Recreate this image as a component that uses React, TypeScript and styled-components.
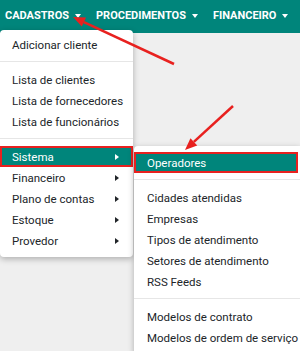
import styled, { createGlobalStyle } from 'styled-components';

const COLORS = {
    TEAL: '#00857b',
    PAGE: '#efefef',
    WHITE: '#ffffff',
    TEXT: '#212529',
    DIVIDER: '#e6e6e6',
    RED: '#e8211f',
};

const GlobalStyle = createGlobalStyle`
    html, body {
        margin: 0;
        padding: 0;
        overflow: hidden;
    }
    body {
        font-family: Roboto, 'Liberation Sans', sans-serif;
        background: ${COLORS.PAGE};
    }
`;

const Page = styled.div`
    position: relative;
    width: 300px;
    height: 351px;
    overflow: hidden;
    background: ${COLORS.PAGE};
`;

const NavBar = styled.nav`
    display: flex;
    align-items: center;
    gap: 15px;
    height: 33px;
    padding: 0 0 2px 5px;
    box-sizing: border-box;
    background: ${COLORS.TEAL};
`;

const NavItem = styled.div`
    display: flex;
    align-items: center;
    gap: 6px;
    color: ${COLORS.WHITE};
    font-size: 11px;
    font-weight: 700;
    white-space: nowrap;
`;

const DownCaret = styled.span`
    width: 0;
    height: 0;
    border-left: 3px solid transparent;
    border-right: 3px solid transparent;
    border-top: 4px solid ${COLORS.WHITE};
`;

const Menu = styled.div<{ $width: number }>`
    position: absolute;
    width: ${(p) => p.$width}px;
    padding: 4px 0 6px;
    background: ${COLORS.WHITE};
    border-radius: 4px;
    box-shadow: 0 2px 6px rgba(0, 0, 0, 0.28);
    box-sizing: border-box;
`;

const MainMenu = styled(Menu)`
    top: 30px;
    left: 0;
`;

const SubMenu = styled(Menu)`
    top: 0;
    left: 134px;
    padding-top: 6px;
    border-radius: 4px 0 0 4px;
`;

const ItemRow = styled.div<{ $active?: boolean }>`
    position: relative;
    display: flex;
    align-items: center;
    justify-content: space-between;
    height: 21px;
    padding: 0 14px 0 12px;
    font-size: 11.5px;
    white-space: nowrap;
    color: ${(p) => (p.$active ? COLORS.WHITE : COLORS.TEXT)};
    background: ${(p) => (p.$active ? COLORS.TEAL : 'transparent')};
    box-shadow: ${(p) => (p.$active ? `inset 0 0 0 2px ${COLORS.RED}` : 'none')};
`;

const SubRow = styled(ItemRow)`
    padding: 0 0 0 13px;
    margin-right: 2px;
`;

const RightCaret = styled.span<{ $light?: boolean }>`
    width: 0;
    height: 0;
    border-top: 3px solid transparent;
    border-bottom: 3px solid transparent;
    border-left: 4px solid ${(p) => (p.$light ? COLORS.WHITE : COLORS.TEXT)};
`;

const Divider = styled.div`
    height: 1px;
    margin: 6px 0 7px;
    background: ${COLORS.DIVIDER};
`;

const Annotations = styled.svg`
    position: absolute;
    inset: 0;
    pointer-events: none;
`;

const Arrow = ({ x1, y1, x2, y2 }: { x1: number; y1: number; x2: number; y2: number }) => {
    const angle = Math.atan2(y2 - y1, x2 - x1);
    const len = 12;
    const half = 5;
    const bx = x2 - len * Math.cos(angle);
    const by = y2 - len * Math.sin(angle);
    const px = -Math.sin(angle) * half;
    const py = Math.cos(angle) * half;
    return (
        <g>
            <line x1={x1} y1={y1} x2={bx} y2={by} stroke={COLORS.RED} strokeWidth={2.5} />
            <polygon points={`${x2},${y2} ${bx + px},${by + py} ${bx - px},${by - py}`} fill={COLORS.RED} />
        </g>
    );
};

const sistemaItems = [
    ['Operadores'],
    ['Cidades atendidas', 'Empresas', 'Tipos de atendimento', 'Setores de atendimento', 'RSS Feeds'],
    ['Modelos de contrato', 'Modelos de ordem de serviço'],
];

const App = () => {
    return (
        <Page>
            <GlobalStyle />
            <NavBar>
                {['CADASTROS', 'PROCEDIMENTOS', 'FINANCEIRO'].map((label) => (
                    <NavItem key={label}>
                        {label}
                        <DownCaret />
                    </NavItem>
                ))}
            </NavBar>

            <MainMenu $width={133}>
                <ItemRow>Adicionar cliente</ItemRow>
                <Divider />
                <ItemRow>Lista de clientes</ItemRow>
                <ItemRow>Lista de fornecedores</ItemRow>
                <ItemRow>Lista de funcionários</ItemRow>
                <Divider />
                <ItemRow $active>
                    Sistema
                    <RightCaret $light />
                    <SubMenu $width={166}>
                        {sistemaItems.map((group, gi) => (
                            <div key={gi}>
                                {gi > 0 && <Divider />}
                                {group.map((label) => (
                                    <SubRow key={label} $active={label === 'Operadores'}>
                                        {label}
                                    </SubRow>
                                ))}
                            </div>
                        ))}
                    </SubMenu>
                </ItemRow>
                {['Financeiro', 'Plano de contas', 'Estoque', 'Provedor'].map((label) => (
                    <ItemRow key={label}>
                        {label}
                        <RightCaret />
                    </ItemRow>
                ))}
            </MainMenu>

            <Annotations width={300} height={351}>
                <Arrow x1={174} y1={64} x2={73} y2={17} />
                <Arrow x1={233} y1={106} x2={185} y2={150} />
            </Annotations>
        </Page>
    );
};

export default App;
